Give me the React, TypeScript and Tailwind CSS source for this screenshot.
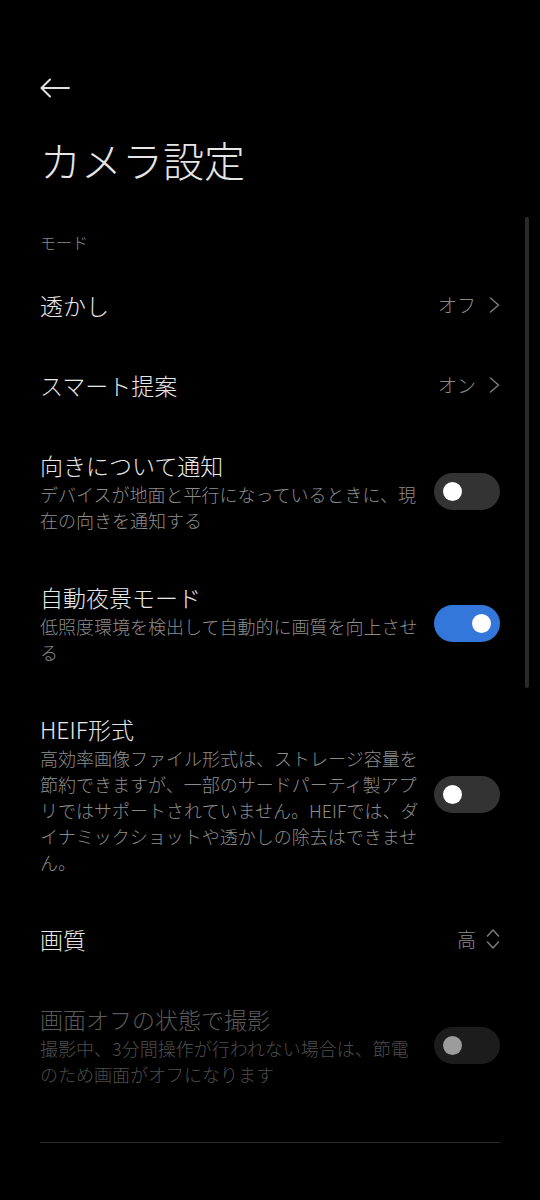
import React from 'react';

const font = { fontFamily: '"Noto Sans CJK JP", "Noto Sans", sans-serif' };

function Toggle({ on, disabled }: { on?: boolean; disabled?: boolean }) {
    const track = disabled ? 'bg-[#1c1c1c]' : on ? 'bg-[#3477da]' : 'bg-[#333333]';
    const knob = disabled ? 'bg-[#9c9c9c]' : 'bg-white';
    return (
        <div className={`w-[66px] h-[37px] rounded-full shrink-0 flex items-center px-[9px] ${track} ${on ? 'justify-end' : 'justify-start'}`}>
            <div className={`w-[19px] h-[19px] rounded-full ${knob}`} />
        </div>
    );
}

function Chevron() {
    return (
        <svg width="11" height="16" viewBox="0 0 11 16" fill="none">
            <path d="M1.5 1 L9.5 8 L1.5 15" stroke="#7a7a7a" strokeWidth="1.5" strokeLinecap="round" strokeLinejoin="round" />
        </svg>
    );
}

function UpDown() {
    return (
        <svg width="14" height="22" viewBox="0 0 14 22" fill="none">
            <path d="M1.5 8 L7 2 L12.5 8" stroke="#7a7a7a" strokeWidth="1.5" strokeLinecap="round" strokeLinejoin="round" />
            <path d="M1.5 14 L7 20 L12.5 14" stroke="#7a7a7a" strokeWidth="1.5" strokeLinecap="round" strokeLinejoin="round" />
        </svg>
    );
}

function ValueRow({ title, value, updown }: { title: string; value: string; updown?: boolean }) {
    return (
        <div className="flex items-center py-[24px]">
            <div className="flex-1 text-[23px] leading-[32px] font-light text-[#e8e8e8]">{title}</div>
            <div className={`flex items-center ${updown ? 'gap-[10px]' : 'gap-[13px]'}`}>
                <span className="text-[19px] leading-[32px] font-light text-[#8a8a8a]">{value}</span>
                {updown ? <UpDown /> : <Chevron />}
            </div>
        </div>
    );
}

function ToggleRow({ title, desc, on, disabled }: { title: string; desc: string; on?: boolean; disabled?: boolean }) {
    return (
        <div className="flex items-center gap-[13px] py-[24px]">
            <div className="flex-1">
                <div className={`text-[23px] leading-[32px] font-light ${disabled ? 'text-[#5a5a5a]' : 'text-[#e8e8e8]'}`}>{title}</div>
                <div className={`text-[18px] leading-[26px] font-light ${disabled ? 'text-[#4d4d4d]' : 'text-[#8c8c8c]'}`}>{desc}</div>
            </div>
            <Toggle on={on} disabled={disabled} />
        </div>
    );
}

export default function App() {
    return (
        <div className="relative w-[540px] min-h-[1200px] bg-black overflow-hidden" style={font}>
            <div className="px-10">
                <div className="pt-[78px]">
                    <svg width="30" height="20" viewBox="0 0 30 20" fill="none">
                        <path d="M29 10 H2 M10 1.5 L1.5 10 L10 18.5" stroke="#e0e0e0" strokeWidth="2" strokeLinecap="round" strokeLinejoin="round" />
                    </svg>
                </div>
                <h1 className="mt-[33px] text-[41px] leading-[56px] text-[#e6e6e6] font-light">カメラ設定</h1>
                <div className="mt-[43px] text-[16px] leading-[24px] font-light text-[#8a8a8a]">モード</div>
                <div className="mt-[11px]">
                    <ValueRow title="透かし" value="オフ" />
                    <ValueRow title="スマート提案" value="オン" />
                    <ToggleRow title="向きについて通知" desc="デバイスが地面と平行になっているときに、現在の向きを通知する" />
                    <ToggleRow title="自動夜景モード" desc="低照度環境を検出して自動的に画質を向上させる" on />
                    <ToggleRow
                        title="HEIF形式"
                        desc="高効率画像ファイル形式は、ストレージ容量を節約できますが、一部のサードパーティ製アプリではサポートされていません。HEIFでは、ダイナミックショットや透かしの除去はできません。"
                    />
                    <ValueRow title="画質" value="高" updown />
                    <ToggleRow title="画面オフの状態で撮影" desc="撮影中、3分間操作が行われない場合は、節電のため画面がオフになります" disabled />
                </div>
                <div className="mt-[31px] h-px bg-[#2e2e2e]" />
            </div>
            <div className="absolute left-[525px] top-[217px] w-[4px] h-[471px] rounded-full bg-[#2a2a2a]" />
        </div>
    );
}
